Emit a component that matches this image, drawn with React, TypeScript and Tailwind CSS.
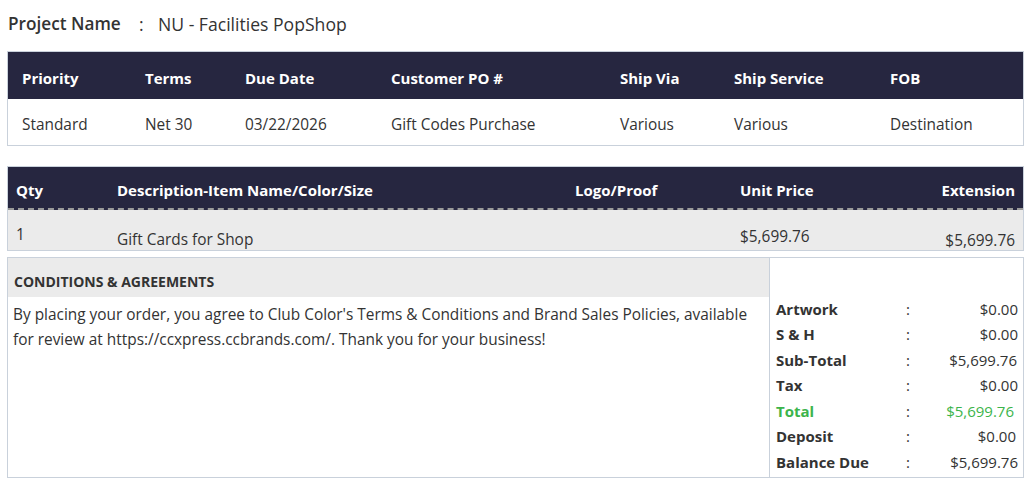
import * as React from "react"

const summary = [
  { label: "Artwork", value: "$0.00", pad: "" },
  { label: "S & H", value: "$0.00", pad: "" },
  { label: "Sub-Total", value: "$5,699.76", pad: "pr-[1px]" },
  { label: "Tax", value: "$0.00", pad: "" },
  { label: "Total", value: "$5,699.76", green: true, pad: "pr-[4px]" },
  { label: "Deposit", value: "$0.00", pad: "pr-[2px]" },
  { label: "Balance Due", value: "$5,699.76", pad: "" },
]

export default function App() {
  return (
    <div
      className="h-[487px] w-[1035px] bg-white text-[#333]"
      style={{ fontFamily: '"Open Sans", "Liberation Sans", sans-serif' }}
    >
      <div className="pl-[7px] pr-[11px] pt-[11px]">
        {/* Project name */}
        <div className="flex h-[26px] items-center pl-[1px] text-[17.6px]">
          <span className="w-[131px] text-[17.2px] font-semibold">Project Name</span>
          <span className="w-[19px]">:</span>
          <span>NU - Facilities PopShop</span>
        </div>

        {/* Order info */}
        <div className="mt-[14px] border border-[#c9d1db]">
          <div className="grid h-[47px] grid-cols-[123px_100px_146px_229px_114px_156px_1fr] items-center bg-[#262640] pl-[14px] pt-[6px] text-[15px] font-bold text-white">
            <div>Priority</div>
            <div>Terms</div>
            <div>Due Date</div>
            <div>Customer PO #</div>
            <div>Ship Via</div>
            <div>Ship Service</div>
            <div>FOB</div>
          </div>
          <div className="grid h-[46px] grid-cols-[123px_100px_146px_229px_114px_156px_1fr] items-center pl-[14px] pt-[6px] text-[15.4px]">
            <div>Standard</div>
            <div>Net 30</div>
            <div>03/22/2026</div>
            <div>Gift Codes Purchase</div>
            <div>Various</div>
            <div>Various</div>
            <div>Destination</div>
          </div>
        </div>

        {/* Line items */}
        <div className="mt-[20px] border border-[#c9d1db]">
          <div className="grid h-[43px] grid-cols-[101px_458px_165px_1fr_1fr] items-center border-b-2 border-dashed border-[#9a9a9a] bg-[#262640] pl-[8px] pr-[8px] pt-[5px] text-[15px] font-bold text-white">
            <div>Qty</div>
            <div>Description-Item Name/Color/Size</div>
            <div>Logo/Proof</div>
            <div>Unit Price</div>
            <div className="text-right">Extension</div>
          </div>
          <div className="grid h-[40px] grid-cols-[101px_458px_165px_1fr_1fr] items-start bg-[#ebebeb] pl-[8px] pr-[8px] text-[15.4px]">
            <div className="pt-[13px]">1</div>
            <div className="pt-[18px]">Gift Cards for Shop</div>
            <div />
            <div className="pt-[15px]">$5,699.76</div>
            <div className="pt-[19px] text-right">$5,699.76</div>
          </div>
        </div>

        {/* Conditions and totals */}
        <div className="mt-[6px] flex h-[221px]">
          <div className="w-[762px] border border-r-0 border-[#c9d1db]">
            <div className="flex h-[39px] items-center bg-[#ebebeb] pl-[6px] pt-[8px] text-[14px] font-bold">
              CONDITIONS &amp; AGREEMENTS
            </div>
            <p className="pl-[5px] pr-[6px] pt-[5px] text-[15.4px] leading-[25px]">
              By placing your order, you agree to Club Color's Terms &amp; Conditions and Brand Sales Policies, available
              for review at https://ccxpress.ccbrands.com/. Thank you for your business!
            </p>
          </div>
          <div className="flex-1 border border-[#c9d1db] pl-[6px] pr-[5px] pt-[38px]">
            {summary.map((row) => (
              <div
                key={row.label}
                className="grid h-[25.5px] grid-cols-[130px_30px_1fr] items-center text-[15px]"
              >
                <span className={"font-bold " + (row.green ? "text-[#3cb44b]" : "")}>{row.label}</span>
                <span>:</span>
                <span className={"text-right " + row.pad + (row.green ? " text-[#3cb44b]" : "")}>
                  {row.value}
                </span>
              </div>
            ))}
          </div>
        </div>
      </div>
    </div>
  )
}
